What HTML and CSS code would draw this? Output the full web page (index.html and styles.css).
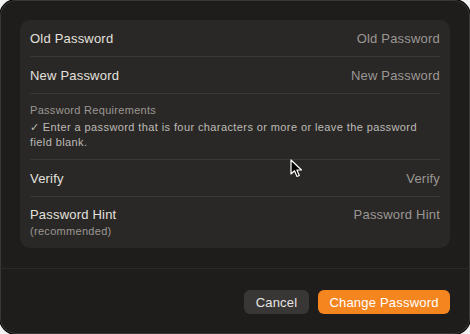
FILE: index.html
```html
<!DOCTYPE html>
<html lang="en">
<head>
    <meta charset="UTF-8">
    <title>Change Password</title>
    <link rel="stylesheet" href="styles.css">
</head>
<body>
    <div class="window">
        <div class="form-card">
            <div class="row">
                <span class="label">Old Password</span>
                <span class="placeholder">Old Password</span>
            </div>
            <div class="row">
                <span class="label">New Password</span>
                <span class="placeholder">New Password</span>
            </div>
            <div class="row requirements">
                <div class="req-title">Password Requirements</div>
                <div class="req-text">✓ Enter a password that is four characters or more or leave the password field blank.</div>
            </div>
            <div class="row">
                <span class="label">Verify</span>
                <span class="placeholder">Verify</span>
            </div>
            <div class="row hint">
                <div>
                    <div class="label">Password Hint</div>
                    <div class="sub">(recommended)</div>
                </div>
                <span class="placeholder">Password Hint</span>
            </div>
        </div>

        <div class="footer">
            <button class="btn cancel">Cancel</button>
            <button class="btn primary">Change Password</button>
        </div>

        <svg class="cursor" width="14" height="20" viewBox="0 0 14 20">
            <path d="M1 1 L1 15 L4.5 11.8 L7 17.5 L9.3 16.5 L6.9 11 L11.5 11 Z" fill="#000" stroke="#fff" stroke-width="1.2" stroke-linejoin="round"/>
        </svg>
    </div>
</body>
</html>
```

FILE: styles.css
```css
:root {
    --bg: #f2f2f2;
    --window: #1f1d1b;
    --card: #2a2826;
    --line: #3a3836;
    --text: #e3e1de;
    --muted: #9a9794;
    --accent: #f5851f;
}

body {
    margin: 0;
    background: var(--bg);
    font-family: "Liberation Sans", Arial, sans-serif;
}

.window {
    position: relative;
    width: 470px;
    height: 334px;
    box-sizing: border-box;
    padding: 20px 20px 0;
    background: var(--window);
    border-radius: 16px;
    box-shadow: inset 0 0 0 1px rgba(255, 255, 255, 0.12), 0 0 0 1px #000;
    overflow: hidden;
}

.form-card {
    background: var(--card);
    border-radius: 10px;
    padding: 0 10px;
}

.row {
    display: flex;
    justify-content: space-between;
    align-items: flex-start;
    padding: 11px 0 9px;
    line-height: 16px;
    font-size: 13px;
    letter-spacing: 0.2px;
    border-bottom: 1px solid var(--line);
}

.row:last-child {
    border-bottom: none;
}

.label {
    color: var(--text);
}

.placeholder {
    color: var(--muted);
}

.requirements {
    display: block;
    padding: 9px 0;
    font-size: 11px;
    line-height: 15px;
    letter-spacing: 0.3px;
    color: var(--muted);
}

.req-title {
    margin-bottom: 2px;
}

.req-text {
    max-width: 392px;
    letter-spacing: 0.4px;
    color: #bdbab6;
}

.hint {
    padding: 10px 0 9px;
}

.sub {
    margin-top: 1px;
    font-size: 11px;
    line-height: 15px;
    letter-spacing: 0.3px;
    color: var(--muted);
}

.footer {
    display: flex;
    justify-content: flex-end;
    gap: 9px;
    margin: 20px -20px 0;
    padding: 21px 20px 0;
    border-top: 1px solid #2c2a28;
}

.btn {
    height: 24px;
    padding: 0;
    border: none;
    border-radius: 6px;
    font-family: inherit;
    font-size: 13px;
    letter-spacing: 0.2px;
    color: #e8e6e3;
    cursor: pointer;
}

.cancel {
    width: 65px;
    background: #393735;
}

.primary {
    width: 132px;
    background: var(--accent);
    color: #fff;
}

.cursor {
    position: absolute;
    left: 290px;
    top: 159px;
}
```
